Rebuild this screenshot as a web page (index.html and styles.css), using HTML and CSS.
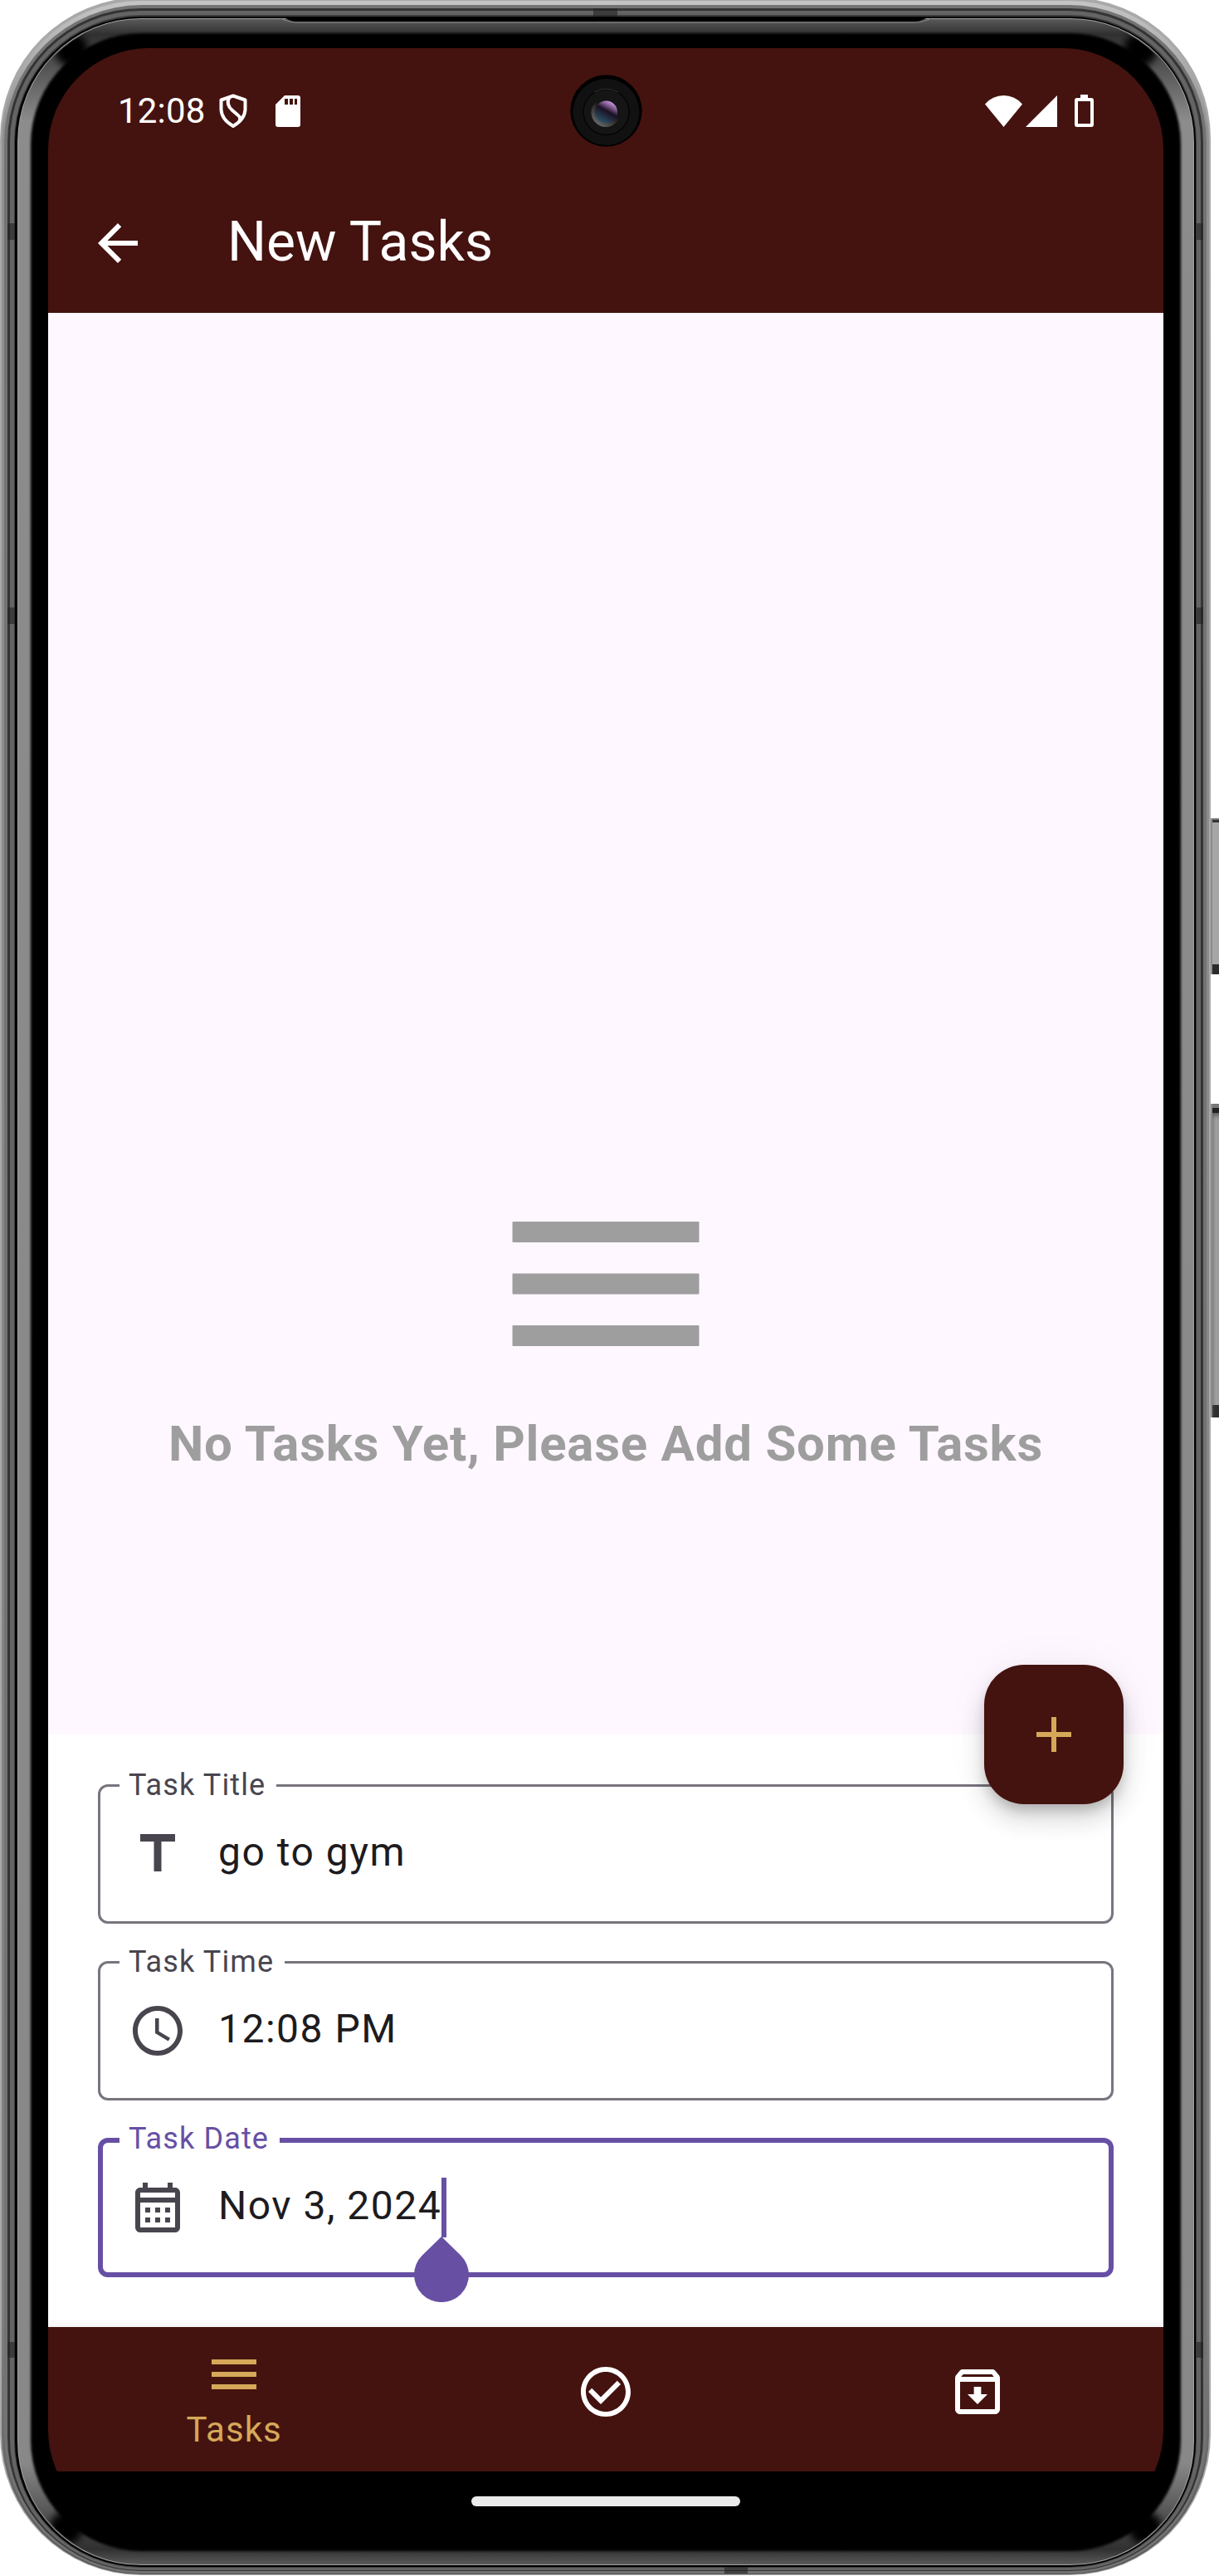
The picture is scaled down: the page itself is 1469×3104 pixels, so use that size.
FILE: index.html
```html
<!DOCTYPE html>
<html lang="en">
<head>
<meta charset="utf-8">
<title>New Tasks</title>
<link rel="stylesheet" href="styles.css">
</head>
<body>
<div class="stage">
  <i class="side-button power"></i>
  <i class="side-button volume"></i>
  <div class="phone">
    <svg class="frame" width="1469" height="3104" viewBox="0 0 1469 3104" fill="none" aria-hidden="true">
      <defs>
        <linearGradient id="rimTop" x1="0" y1="0" x2="0" y2="1">
          <stop offset="0" stop-color="#c4c4c4"/><stop offset=".05" stop-color="#929292"/><stop offset=".9" stop-color="#808080"/><stop offset="1" stop-color="#555"/>
        </linearGradient>
        <linearGradient id="glass" x1="0" y1="0" x2="0" y2="1">
          <stop offset="0" stop-color="#5a5a5a"/><stop offset=".006" stop-color="#303030"/><stop offset=".04" stop-color="#8c8c8c"/><stop offset=".96" stop-color="#888"/><stop offset=".994" stop-color="#303030"/><stop offset="1" stop-color="#5a5a5a"/>
        </linearGradient>
        <filter id="soft" x="-5%" y="-5%" width="110%" height="110%"><feGaussianBlur stdDeviation="1.600"/></filter>
        <filter id="shade" x="-50%" y="-50%" width="200%" height="200%"><feGaussianBlur stdDeviation="5"/></filter>
        <clipPath id="glassClip"><rect x="23" y="24" width="1414" height="3065" rx="147"/></clipPath>
      </defs>
      <rect x="0" y="-3" width="1459" height="3106" rx="170" fill="#a9a9a9"/>
      <rect x="2" y="1" width="1455" height="3101" rx="168" fill="url(#rimTop)"/>
      <rect x="5" y="6" width="1449" height="3095" rx="166" fill="#737373"/>
      <rect x="9" y="10" width="1441" height="3088" rx="161" fill="#343434"/>
      <rect x="12" y="13" width="1435" height="3084" rx="158" fill="#646464"/>
      <rect x="17" y="18" width="1425" height="3076" rx="153" fill="#3c3c3c"/>
      <rect x="18" y="20" width="1423" height="3073" rx="152" fill="#000"/>
      <rect x="21" y="22" width="1418" height="3069" rx="149" fill="#a0a0a0"/>
      <rect x="22" y="23" width="1416" height="3067" rx="148" fill="url(#glass)"/>
      <rect x="37" y="40" width="1386" height="3034" rx="134" fill="#000" filter="url(#soft)"/>
      <g clip-path="url(#glassClip)">
        <g fill="#000" filter="url(#shade)">
          <circle cx="86" cy="60" r="20"/><circle cx="1374" cy="60" r="20"/>
          <circle cx="80" cy="3046" r="20"/><circle cx="1380" cy="3046" r="20"/>
        </g>
      </g>
      <path d="M337 20.500H1124L1116 22Q1108 26 1104 26H356Q352 26 344 22Z" fill="#000"/>
      <path d="M337 22Q350 27 356 27H1104Q1110 27 1123 22" stroke="#888" stroke-width="1"/>
      <g fill="#222" fill-opacity=".6">
        <path d="M9 269h9v20H9zM1442 269h8v20h-8zM9 732h9v20H9zM1442 732h8v20h-8zM9 2822h9v19H9zM1442 2822h8v19h-8zM715 10h29v10h-29zM873 3093h28v8h-28z"/>
      </g>
    </svg>
    <div class="screen">
      <div class="statusbar">
        <span class="clock">12:08</span>
        <svg class="shield" width="34" height="42" viewBox="0 0 34 42" fill="none" stroke="#fff" stroke-width="4" stroke-linejoin="round"><path d="M17 2.500L31.500 7.500V19Q31 31 17 39Q3 31 2.500 19V7.500Z"/><path d="M12 5Q8 13 16 20L23 26Q27 29 24 34"/></svg>
        <svg class="sd" width="30" height="38" viewBox="0 0 30 38"><path fill="#fff" d="M11 0H27Q30 0 30 3V35Q30 38 27 38H3Q0 38 0 35V11Z"/><path fill="#44130f" d="M11 4h4v7h-4zM17 4h4v7h-4zM23 4h3v7h-3z"/></svg>
        <span class="spacer"></span>
        <svg class="wifi" width="45" height="38" viewBox="0 0 45 38"><path fill="#fff" d="M0 10.500Q9 0 22.500 0T45 10.500L22.500 38Z"/></svg>
        <svg class="signal" width="38" height="38" viewBox="0 0 38 38"><path fill="#fff" d="M38 0V38H0Z"/></svg>
        <svg class="battery" width="23" height="39" viewBox="0 0 23 39"><path fill="#fff" fill-rule="evenodd" d="M7 0h9v4h4q3 0 3 3v29q0 3-3 3H3q-3 0-3-3V7q0-3 3-3h4zM4 8v27h15V8z"/></svg>
        <svg class="camera" width="87" height="87" viewBox="0 0 87 87">
          <defs>
            <linearGradient id="lens" x1=".85" y1=".1" x2=".35" y2="1"><stop offset="0" stop-color="#d79be8"/><stop offset=".22" stop-color="#7d5a8e"/><stop offset=".45" stop-color="#1b1023"/><stop offset="1" stop-color="#2c5468"/></linearGradient>
            <linearGradient id="ring" x1=".8" y1=".1" x2=".2" y2=".9"><stop offset=".4" stop-color="#161616"/><stop offset="1" stop-color="#666"/></linearGradient>
          </defs>
          <circle cx="43.500" cy="43.500" r="43.200"/><circle cx="43.500" cy="45" r="40" fill="#111"/>
          <circle cx="43.500" cy="45" r="27.500" fill="#151515" stroke="#050505" stroke-width="1.500"/>
          <path d="M29 21Q43 13 58 21" stroke="#333" fill="none"/>
          <circle cx="43" cy="45.500" r="17.500" fill="url(#ring)"/><circle cx="43.500" cy="45" r="13.500" fill="url(#lens)"/>
        </svg>
      </div>
      <header class="appbar">
        <svg class="back" width="72" height="72" viewBox="0 0 24 24"><path fill="#fff" d="M20 11H7.830l5.590-5.590L12 4l-8 8 8 8 1.410-1.410L7.830 13H20v-2z"/></svg>
        <h1>New Tasks</h1>
      </header>
      <main class="empty">
        <svg width="300" height="300" viewBox="0 0 300 300" fill="#9e9e9e"><rect x="37.500" y="75" width="225" height="25" rx="1"/><rect x="37.500" y="137.500" width="225" height="25" rx="1"/><rect x="37.500" y="200" width="225" height="25" rx="1"/></svg>
        <p>No Tasks Yet, Please Add Some Tasks</p>
      </main>
      <section class="sheet">
        <button class="fab" aria-label="Add"><svg width="72" height="72" viewBox="0 0 24 24"><path fill="#d6a859" d="M19 13h-6v6h-2v-6H5v-2h6V5h2v6h6v2z"/></svg></button>
        <fieldset class="field"><legend>Task Title</legend>
          <div class="row"><svg width="72" height="72" viewBox="0 0 24 24"><path fill="#49454f" d="M5 4v3h5.500v12h3V7H19V4z"/></svg><span>go to gym</span></div>
        </fieldset>
        <fieldset class="field"><legend>Task Time</legend>
          <div class="row"><svg width="72" height="72" viewBox="0 0 24 24"><path fill="#49454f" d="M11.990 2C6.470 2 2 6.480 2 12s4.470 10 9.990 10C17.520 22 22 17.520 22 12S17.520 2 11.990 2zM12 20c-4.420 0-8-3.580-8-8s3.580-8 8-8 8 3.580 8 8-3.580 8-8 8zm.5-13H11v6l5.250 3.150.75-1.230-4.500-2.670z"/></svg><span>12:08 PM</span></div>
        </fieldset>
        <fieldset class="field focused"><legend>Task Date</legend>
          <div class="row"><svg width="72" height="72" viewBox="0 0 24 24"><path fill="#49454f" fill-rule="evenodd" d="M19 4h-1V2h-2v2H8V2H6v2H5c-1.110 0-2 .9-2 2v14c0 1.100.9 2 2 2h14c1.100 0 2-.9 2-2V6c0-1.100-.9-2-2-2zm0 16H5V10h14v10zm0-12H5V6h14v2zM7 12h2v2H7zm4 0h2v2h-2zm4 0h2v2h-2zM7 16h2v2H7zm4 0h2v2h-2zm4 0h2v2h-2z"/></svg><span class="editing">Nov 3, 2024<i class="caret"></i><svg class="handle" width="66" height="79" viewBox="0 0 66 79"><path fill="#6750a4" d="M33 0L56.300 22.700A33 33 0 1 1 9.700 22.700Z"/></svg></span></div>
        </fieldset>
      </section>
      <nav class="tabs">
        <div class="tab active"><svg width="72" height="72" viewBox="0 0 24 24"><path fill="#d6a859" d="M3 18h18v-2H3v2zm0-5h18v-2H3v2zm0-7v2h18V6H3z"/></svg><span>Tasks</span></div>
        <div class="tab"><svg width="72" height="72" viewBox="0 0 24 24"><path fill="#fff" d="M16.590 7.580L10 14.170l-3.590-3.580L5 12l5 5 8-8zM12 2C6.480 2 2 6.480 2 12s4.480 10 10 10 10-4.480 10-10S17.520 2 12 2zm0 18c-4.420 0-8-3.580-8-8s3.580-8 8-8 8 3.580 8 8-3.580 8-8 8z"/></svg></div>
        <div class="tab"><svg width="72" height="72" viewBox="0 0 24 24"><path fill="#fff" d="M20.540 5.230l-1.390-1.680C18.880 3.210 18.470 3 18 3H6c-.47 0-.88.210-1.160.55L3.460 5.230C3.170 5.570 3 6.020 3 6.500V19c0 1.100.9 2 2 2h14c1.100 0 2-.9 2-2V6.500c0-.48-.17-.93-.46-1.270zM6.240 5h11.520l.83 1H5.420l.82-1zM5 19V8h14v11H5zm8.450-9h-2.900v3H8l4 4 4-4h-2.550z"/></svg></div>
      </nav>
      <div class="gesture"><i></i></div>
    </div>
  </div>
</div>
</body>
</html>
```
FILE: styles.css
```css
* { box-sizing: border-box; }
body { margin: 0; background: #fff; font-family: Roboto, "Liberation Sans", sans-serif; }
.stage { position: relative; width: 1469px; height: 3104px; overflow: hidden; }
.phone { position: relative; width: 1460px; height: 3104px; padding: 58px; }
.frame { position: absolute; left: 0; top: 0; }
.side-button { position: absolute; left: 1458px; width: 14px; border: solid #8c8c8c; border-width: 0 0 0 3px; background: #a6a6a6; }
.power { top: 986px; height: 188px; box-shadow: inset 0 2px #777, inset 0 5px #333, inset 0 -12px #2b2b2b; }
.volume { top: 1330px; height: 378px; box-shadow: inset 0 5px #777, inset 0 11px #222, inset 0 14px 6px #555, inset 0 -15px #2b2b2b; }

.screen { position: relative; display: flex; flex-direction: column; width: 1344px; height: 2992px; border-radius: 122px; overflow: hidden; background: #000; }
.statusbar { position: relative; display: flex; align-items: center; height: 151px; padding: 0 84px; background: #44130f; flex: none; }
.clock { width: 120px; font-size: 42px; line-height: 50px; letter-spacing: 0.2px; color: #fff; white-space: nowrap; }
.shield { margin-left: 2px; }
.sd { margin-left: 34px; }
.spacer { flex: 1; }
.signal { margin-left: 4px; }
.battery { margin-left: 21px; }
.camera { position: absolute; left: 629px; top: 31.5px; }

.appbar { display: flex; align-items: center; height: 168px; padding-left: 48px; background: #44130f; flex: none; }
.appbar h1 { margin: 0 0 0 96px; padding-bottom: 3px; font-size: 66px; font-weight: 400; line-height: 84px; color: #fff; }

.empty { display: flex; flex-direction: column; align-items: center; height: 1713px; padding-top: 1020px; background: #fef7ff; flex: none; }
.empty svg { display: block; }
.empty p { margin: 7px 0 0; font-size: 60px; font-weight: 700; line-height: 72px; letter-spacing: 0.75px; color: #9e9e9e; white-space: nowrap; }

.sheet { position: relative; height: 714px; padding: 60px 60px 0; background: #fff; flex: none; box-shadow: inset 0 -10px 10px -8px #eee; }
.field { height: 190px; margin: -22px 0 45px; padding: 0 0 0 33px; border: 3px solid #79747e; border-radius: 12px; min-width: 0; }
.field legend { height: 47px; margin-left: -10px; padding: 0 13px 0 11px; font-size: 36px; line-height: 46px; letter-spacing: 1.13px; color: #49454f; }
.row { display: flex; align-items: center; height: 118px; font-size: 48px; line-height: 56px; letter-spacing: 1.5px; color: #1d1b20; white-space: pre; }
.row > span { margin-left: 37px; padding-bottom: 4px; }
.focused { border-width: 6px; border-color: #6750a4; padding-left: 30px; }
.focused legend { height: 50px; color: #6750a4; }
.focused .row { height: 112px; }
.editing { position: relative; }
.caret { position: absolute; left: 100%; top: -6px; width: 6px; height: 72px; background: #6750a4; }
.handle { position: absolute; right: -33px; top: 65px; }
.fab { position: absolute; z-index: 1; right: 48px; top: -84px; display: flex; align-items: center; justify-content: center; width: 168px; height: 168px; padding: 0; border: 0; border-radius: 48px; background: #44130f; box-shadow: 0 9px 15px -3px rgba(0,0,0,.2), 0 18px 30px rgba(0,0,0,.14), 0 3px 54px rgba(0,0,0,.05); }

.tabs { display: grid; grid-template-columns: repeat(3, 1fr); height: 174px; background: #44130f; flex: none; }
.tab { display: flex; flex-direction: column; align-items: center; padding-top: 42px; }
.tab.active { padding-top: 21px; }
.tab span { margin-top: 1px; font-size: 42px; line-height: 60px; letter-spacing: 1px; color: #d6a859; }
.gesture { display: flex; justify-content: center; padding-top: 30px; flex: 1; background: #000; }
.gesture i { width: 324px; height: 12px; border-radius: 6px; background: #ebebeb; }
```
